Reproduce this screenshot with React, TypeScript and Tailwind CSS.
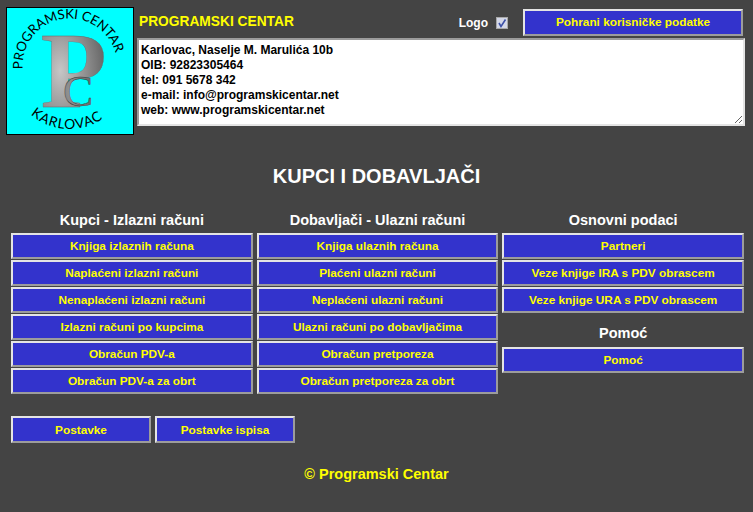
const contact = `Karlovac, Naselje M. Marulića 10b
OIB: 92823305464
tel: 091 5678 342
e-mail: info@programskicentar.net
web: www.programskicentar.net`;

const columns = [
  {
    title: "Kupci - Izlazni računi",
    links: [
      "Knjiga izlaznih računa",
      "Naplaćeni izlazni računi",
      "Nenaplaćeni izlazni računi",
      "Izlazni računi po kupcima",
      "Obračun PDV-a",
      "Obračun PDV-a za obrt",
    ],
  },
  {
    title: "Dobavljači - Ulazni računi",
    links: [
      "Knjiga ulaznih računa",
      "Plaćeni ulazni računi",
      "Neplaćeni ulazni računi",
      "Ulazni računi po dobavljačima",
      "Obračun pretporeza",
      "Obračun pretporeza za obrt",
    ],
  },
];

function MenuButton({ label, className = "h-[26px] w-full pt-[2px]" }: { label: string; className?: string }) {
  return (
    <button className={`${className} border-2 border-t-[#e4e4e4] border-l-[#e4e4e4] border-r-[#9c9c9c] border-b-[#9c9c9c] bg-[#3333cc] text-[11.8px] font-bold text-[#ffff00]`}>
      {label}
    </button>
  );
}

function Logo() {
  return (
    <svg viewBox="0 0 128 128" className="h-[128px] w-[128px] shrink-0 border border-black bg-[#00ffff]">
      <defs>
        <radialGradient id="pc" cx="0.3" cy="0.5" r="0.75">
          <stop offset="0" stopColor="#c6c6c6" />
          <stop offset="1" stopColor="#5c5c5c" />
        </radialGradient>
        <radialGradient id="pc-small" cx="0.3" cy="0.5" r="0.8">
          <stop offset="0" stopColor="#9a9a9a" />
          <stop offset="1" stopColor="#606060" />
        </radialGradient>
        <path id="top-arc" d="M 16 62 A 48 48 0 1 1 110 72" />
        <path id="bottom-arc" d="M 24 108 A 60 60 0 0 0 103 108" />
      </defs>
      <text fontFamily="Lato, sans-serif" fontSize="13.5" fill="#000" letterSpacing="-0.1">
        <textPath href="#top-arc">PROGRAMSKI CENTAR</textPath>
      </text>
      <text fontFamily="Lato, sans-serif" fontSize="14" fill="#000" letterSpacing="0.9">
        <textPath href="#bottom-arc">KARLOVAC</textPath>
      </text>
      <text x="34" y="101" fontFamily="'Liberation Serif', serif" fontWeight="700" fontSize="110" fill="url(#pc)" stroke="#666" strokeWidth="0.3">P</text>
      <text x="57" y="100" fontFamily="'Liberation Serif', serif" fontSize="46" fill="url(#pc-small)" stroke="#333" strokeWidth="0.4">C</text>
    </svg>
  );
}

function LogoCheckbox() {
  return (
    <label className="relative ml-[8px] mr-[15px] h-[12px] w-[12px]">
      <input type="checkbox" defaultChecked className="block h-[12px] w-[12px] appearance-none border border-[#a8a8a8] bg-[#d4d8e8]" />
      <svg viewBox="0 0 12 12" className="absolute left-0 top-0 h-[12px] w-[12px]">
        <path d="M3 6 L5 9.5 L9.5 2.5" fill="none" stroke="#3c50a8" strokeWidth="1.6" />
      </svg>
    </label>
  );
}

export default function App() {
  return (
    <div className="h-[512px] w-[753px] overflow-hidden bg-[#444444] font-['Liberation_Sans',Arial,sans-serif]">
      <header className="flex gap-[3px] pl-[6px] pr-[8px] pt-[7px]">
        <Logo />
        <div className="flex-1">
          <div className="flex h-[31px] items-center pr-[2px]">
            <h2 className="ml-[2px] text-[13.75px] font-bold text-[#ffff00]">PROGRAMSKI CENTAR</h2>
            <span className="ml-auto text-xs font-bold text-white">Logo</span>
            <LogoCheckbox />
            <div className="w-[220px]">
              <MenuButton label="Pohrani korisničke podatke" className="h-[27px] w-full" />
            </div>
          </div>
          <textarea
            defaultValue={contact}
            className="h-[88px] w-full border-2 border-t-[#9c9c9c] border-l-[#9c9c9c] border-r-[#e4e4e4] border-b-[#e4e4e4] bg-white px-[2px] pt-[3px] text-xs/[15px] font-bold text-black"
          />
        </div>
      </header>

      <h1 className="mt-[29px] text-center text-xl/[24px] font-bold text-white">KUPCI I DOBAVLJAČI</h1>

      <main className="mt-[24px] grid grid-cols-3 gap-x-[4px] pl-[11px] pr-[9px]">
        {columns.map((col) => (
          <section key={col.title} className="flex flex-col gap-[1px]">
            <h3 className="h-[20px] text-center text-[14.5px]/[17px] font-bold text-white">{col.title}</h3>
            {col.links.map((link) => (
              <MenuButton key={link} label={link} />
            ))}
          </section>
        ))}
        <section className="flex flex-col gap-[1px]">
          <h3 className="h-[20px] text-center text-[14.5px]/[17px] font-bold text-white">Osnovni podaci</h3>
          <MenuButton label="Partneri" />
          <MenuButton label="Veze knjige IRA s PDV obrascem" />
          <MenuButton label="Veze knjige URA s PDV obrascem" />
          <h3 className="mt-[11px] h-[21px] text-center text-[14.5px]/[17px] font-bold text-white">Pomoć</h3>
          <MenuButton label="Pomoć" />
        </section>
      </main>

      <div className="mt-[22px] flex gap-[4px] pl-[11px]">
        <MenuButton label="Postavke" className="h-[27px] w-[140px] pt-[2px]" />
        <MenuButton label="Postavke ispisa" className="h-[27px] w-[140px] pt-[2px]" />
      </div>

      <footer className="mt-[23px] text-center text-[14.5px]/[16px] font-bold text-[#ffff00]">© Programski Centar</footer>
    </div>
  );
}
